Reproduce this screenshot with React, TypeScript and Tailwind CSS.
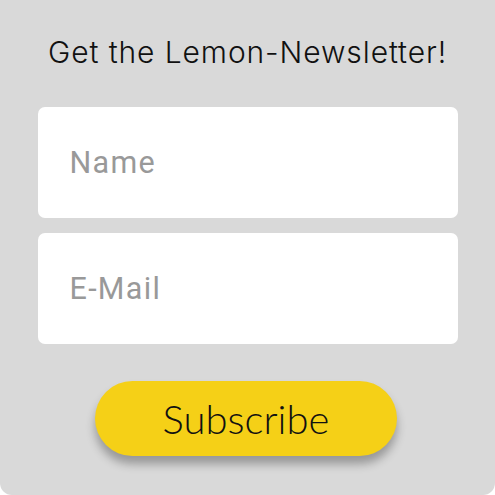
export default function App() {
    return (
        <div className="w-[495px] h-[495px] bg-white">
            <div className="w-full h-full bg-[#d9d9d9] rounded-b-[12px] flex flex-col items-center">
                <h1 className="mt-[32px] text-[30px] leading-[40px] tracking-[0.9px] text-[#111] font-['Inter',sans-serif] font-light">
                    Get the Lemon-Newsletter!
                </h1>
                <div className="mt-[35px] w-[420px] flex flex-col gap-[15px]">
                    <input
                        type="text"
                        placeholder="Name"
                        className="h-[111px] w-full rounded-[7px] bg-white px-[32px] text-[30.5px] font-['Roboto',sans-serif] tracking-[1.3px] text-[#999999] placeholder:text-[#999999] outline-none border-none"
                    />
                    <input
                        type="email"
                        placeholder="E-Mail"
                        className="h-[111px] w-full rounded-[7px] bg-white px-[32px] text-[30.5px] font-['Roboto',sans-serif] tracking-[1.3px] text-[#999999] placeholder:text-[#999999] outline-none border-none"
                    />
                </div>
                <button className="mt-[37px] mr-[3px] w-[302px] h-[75px] rounded-full bg-[#f5d017] text-[40px] font-['Lato',sans-serif] font-light text-[#111] shadow-[0_8px_10px_rgba(0,0,0,0.3)]">
                    Subscribe
                </button>
            </div>
        </div>
    );
}
